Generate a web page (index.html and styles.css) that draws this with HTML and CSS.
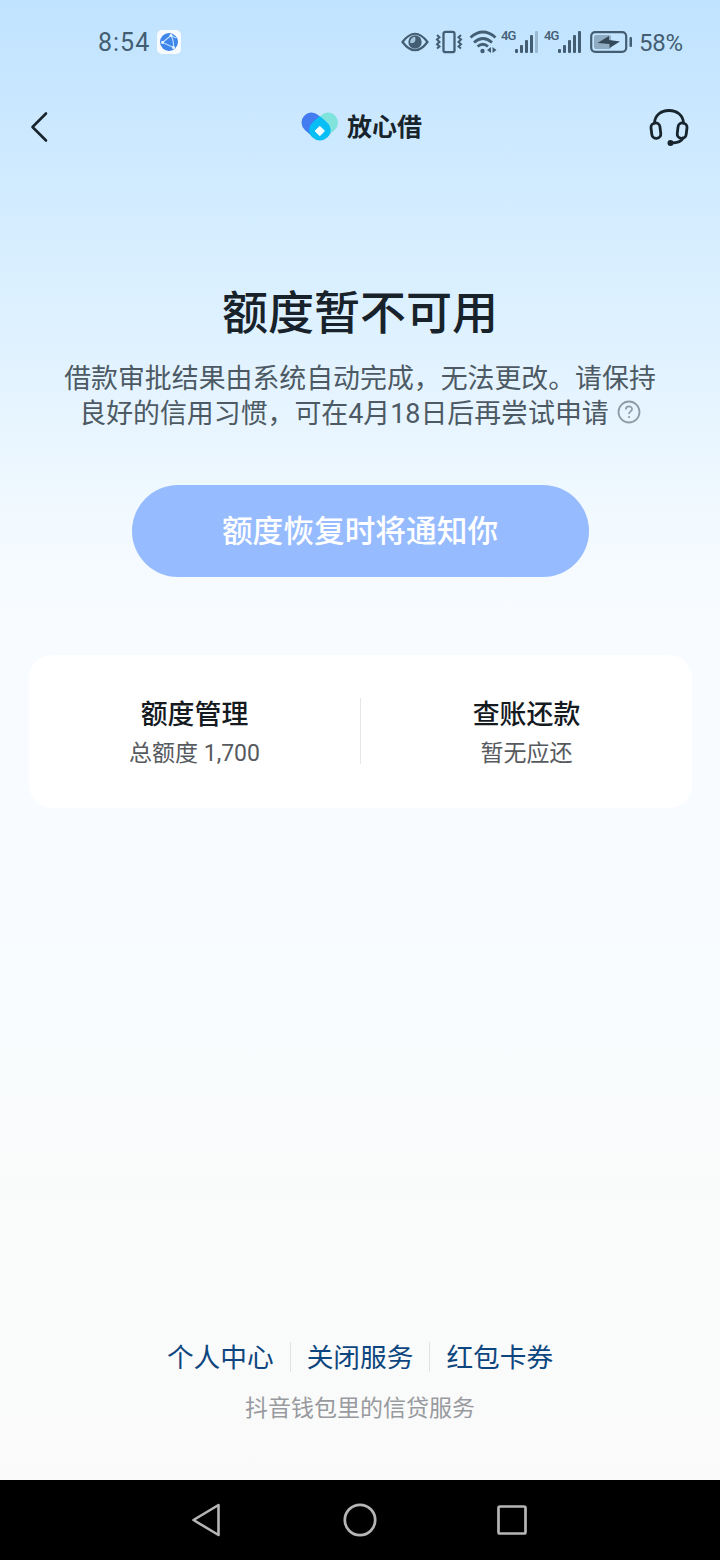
FILE: index.html
```html
<!DOCTYPE html>
<html lang="zh-CN">
<head>
<meta charset="utf-8">
<title>放心借</title>
<link rel="stylesheet" href="styles.css">
</head>
<body>
<div class="screen">
  <header class="status">
    <span class="time">8:54</span>
    <svg class="app-badge" width="24" height="24" viewBox="0 0 24 24">
      <rect width="24" height="24" rx="5" fill="#f7fbff"/>
      <circle cx="12" cy="12" r="9" fill="#3f86ea"/>
      <path d="M5.500 12.500L14 5.500Q17 11 16.500 17.500M5.500 12.500L16.500 17.500M14 5.500L19 8" fill="none" stroke="#b9dcff" stroke-width="1.200"/>
      <circle cx="14" cy="5.500" r="1.400" fill="#e8f5ff"/><circle cx="5.500" cy="12.500" r="1.400" fill="#e8f5ff"/><circle cx="16.500" cy="17.500" r="1.500" fill="#e8f5ff"/>
    </svg>
    <div class="indicators">
      <svg width="28" height="20" viewBox="0 0 28 20">
        <path d="M1.500 10Q14-6.500 26.500 10Q14 26.500 1.500 10Z" fill="none" stroke="#435e73" stroke-width="2.200"/>
        <circle cx="14" cy="10" r="6.700" fill="#435e73"/>
        <path d="M9 10.500Q9.500 5.500 14 4.800Q15.500 9 12.500 10.800Q10.500 11.800 9 10.500Z" fill="#a5c5dd"/>
      </svg>
      <svg class="vibrate" width="28" height="24" viewBox="0 0 28 24" fill="none" stroke="#435e73" stroke-width="2">
        <rect x="8.500" y="1.800" width="11" height="20.400" rx="2" stroke-width="2.300"/>
        <path d="M2 5l2.500 2.300L2 9.600l2.500 2.300L2 14.200l2.500 2.300L2 18.500M26 5l-2.500 2.300L26 9.600l-2.500 2.300 2.500 2.300-2.500 2.300 2.500 2"/>
      </svg>
      <svg class="wifi" width="28" height="24" viewBox="0 0 28 24" fill="none" stroke="#435e73">
        <path d="M1.500 7.500Q14-3.500 26.500 7.500M5 12.500Q14 4.500 23 12.500M8.500 16.500Q14 12 19 16.500" stroke-width="2.800"/>
        <circle cx="13.500" cy="21" r="2.200" fill="#435e73" stroke="none"/>
        <path d="M22 17v6l-4-3zM23.500 17v6l4-3z" fill="#435e73" stroke="none"/>
      </svg>
      <span class="net">4G</span>
      <svg class="bars" width="24" height="24" viewBox="0 0 24 24" fill="#435e73">
        <rect x="0" y="19" width="3" height="4" rx="1"/><rect x="5" y="15" width="3" height="8" rx="1"/><rect x="10" y="10" width="3" height="13" rx="1"/><rect x="15" y="5" width="3" height="18" rx="1"/><rect x="20" y="1" width="3" height="22" rx="1" fill="#9bb9d0"/>
      </svg>
      <span class="net net-two">4G</span>
      <svg class="bars" width="24" height="24" viewBox="0 0 24 24" fill="#435e73">
        <rect x="0" y="19" width="3" height="4" rx="1"/><rect x="5" y="15" width="3" height="8" rx="1"/><rect x="10" y="10" width="3" height="13" rx="1"/><rect x="15" y="5" width="3" height="18" rx="1"/><rect x="20" y="1" width="3" height="22" rx="1"/>
      </svg>
      <svg class="battery" width="43" height="24" viewBox="0 0 43 24">
        <rect x="1.200" y="2.200" width="35" height="19.600" rx="4" fill="none" stroke="#435e73" stroke-width="2.200"/>
        <rect x="4" y="5" width="17" height="14" rx="2" fill="#8facc2"/>
        <path d="M7.500 13L19 6V10L30 11.500L19.500 18V14Z" fill="#34495a"/>
        <rect x="39.500" y="7" width="2.500" height="10" rx="1" fill="#435e73"/>
      </svg>
      <span class="percent">58%</span>
    </div>
  </header>

  <nav class="nav">
    <svg class="back" width="20" height="32" viewBox="0 0 20 32"><path d="M17 2.500L3.500 16L17 29.500" fill="none" stroke="#18242c" stroke-width="2.600" stroke-linecap="round" stroke-linejoin="round"/></svg>
    <div class="brand">
      <svg width="38" height="30" viewBox="0 0 38 30">
        <path d="M27 10.500L19 18" stroke="#80e3dc" stroke-width="20" stroke-linecap="round"/>
        <path d="M10.500 10.500L19 18" stroke="#437cf1" stroke-width="20" stroke-linecap="round"/>
        <path d="M18.800 4.500Q21 5.500 26.500 11C30.500 15 30.800 21 26.500 25.200Q18.800 32 11.200 25.200C7 21 7.200 15 11.200 11Q16.500 5.500 18.800 4.500Z" fill="#08bff5"/>
        <path d="M18.800 14.300L23.500 19L18.800 23.700L14.100 19Z" fill="#f2fdff" stroke="#f2fdff" stroke-linejoin="round"/>
      </svg>
      <span class="brand-name">放心借</span>
    </div>
    <svg class="service" width="40" height="38" viewBox="0 0 40 38" fill="none" stroke="#18242c" stroke-width="2.800" stroke-linecap="round">
      <path d="M5.500 15C6 7 12 2.500 20 2.500s14 4.500 14.500 12.500"/>
      <rect x="2.300" y="15" width="9" height="15.500" rx="4.500" transform="rotate(-7 6.500 22)"/>
      <rect x="28.700" y="15" width="9" height="15.500" rx="4.500" transform="rotate(7 33.500 22)"/>
      <path d="M34 30q-2 5-12 5"/><circle cx="21.500" cy="35" r="3" fill="#18242c" stroke="none"/>
    </svg>
  </nav>

  <main class="content">
    <h1 class="title">额度暂不可用</h1>
    <p class="notice">借款审批结果由系统自动完成，无法更改。请保持<br>良好的信用习惯，可在4月18日后再尝试申请<svg class="help" width="24" height="24" viewBox="0 0 24 24" fill="none" stroke="#8f9ba5"><circle cx="12" cy="12" r="10.500" stroke-width="1.800"/><path d="M8.900 9.500c0-4 6.200-4 6.200-.4 0 2.300-3.100 2.300-3.100 5" stroke-width="1.700"/><circle cx="12" cy="17" r="1.100" fill="#8f9ba5" stroke="none"/></svg></p>
    <button class="action">额度恢复时将通知你</button>
    <section class="card">
      <div class="cell"><div class="cell-title">额度管理</div><div class="cell-sub">总额度 1,700</div></div>
      <div class="cell"><div class="cell-title">查账还款</div><div class="cell-sub">暂无应还</div></div>
    </section>
  </main>

  <footer class="footer">
    <div class="links"><a class="link">个人中心</a><a class="link">关闭服务</a><a class="link">红包卡券</a></div>
    <div class="tagline">抖音钱包里的信贷服务</div>
  </footer>

  <div class="system-nav">
    <svg width="34" height="34" viewBox="0 0 34 34"><path d="M27.500 2L2.500 17L27.500 32Z" fill="none" stroke="#b6b6b6" stroke-width="2.600" stroke-linejoin="round"/></svg>
    <svg width="34" height="34" viewBox="0 0 34 34"><circle cx="17" cy="17" r="15.200" fill="none" stroke="#b6b6b6" stroke-width="2.700"/></svg>
    <svg width="34" height="34" viewBox="0 0 34 34"><rect x="3.500" y="3.500" width="27" height="27" rx="1.500" fill="none" stroke="#b6b6b6" stroke-width="2.700"/></svg>
  </div>
</div>
</body>
</html>
```

FILE: styles.css
```css
* { box-sizing: border-box; }
body { margin: 0; font-family: Roboto, "Noto Sans CJK SC", sans-serif; }
svg { display: block; flex: none; }
.screen {
  width: 720px; height: 1560px; display: flex; flex-direction: column; overflow: hidden;
  background: linear-gradient(#c0e3ff 0, #cbe8ff 120px, #dbf0ff 290px, #e8f5ff 430px, #f2faff 520px, #f8fbff 620px, #f8fbff 900px, #f9fbfb 1180px, #fafafa 1480px);
}
.status { height: 84px; display: flex; align-items: center; padding: 0 34px 0 98px; color: #435e73; }
.time { font-size: 25px; line-height: 30px; letter-spacing: 1px; width: 59px; padding-top: 2px; }
.indicators { margin-left: auto; display: flex; align-items: center; margin-top: -1px; }
.vibrate { margin-left: 6px; }
.wifi { margin-left: 6px; }
.net { font-weight: 500; font-size: 13px; line-height: 14px; width: 15px; height: 26px; margin-left: 4px; letter-spacing: -0.8px; }
.net-two { margin-left: 5px; }
.bars { margin-left: -1px; }
.battery { margin-left: 8px; }
.percent { font-size: 24px; line-height: 30px; letter-spacing: -0.3px; margin-left: 6px; padding-top: 3px; width: 47px; }
.nav { height: 86px; display: flex; align-items: center; justify-content: space-between; padding: 0 31px 0 29px; }
.back { margin-top: -1px; }
.brand { display: flex; align-items: center; gap: 8px; margin-left: 25px; }
.brand-name { font-size: 25px; line-height: 30px; padding-top: 2px; font-weight: 700; color: #18242c; }
.content { display: flex; flex-direction: column; align-items: center; padding: 111px 28px 0; }
.title { margin: 0; font-size: 46px; line-height: 64px; font-weight: 500; color: #18222a; }
.notice { margin: 17px 0 0; font-size: 26.9px; line-height: 35px; color: #4d5a64; text-align: center; white-space: nowrap; }
.help { display: inline-block; vertical-align: -1px; margin-left: 8px; }
.action { margin: 53px 0 0; padding: 2px 0 0; width: 457px; height: 92px; border: 0; border-radius: 46px; background: #96bbff; color: #fff; font-family: inherit; font-size: 30.7px; line-height: 44px; font-weight: 500; }
.card { width: 663px; height: 153px; margin: 78px 0 0 1px; padding-bottom: 2px; border-radius: 23px; background: #fff; display: grid; grid-template-columns: 331px 332px; align-items: center; text-align: center; }
.cell { height: 66px; }
.cell + .cell { border-left: 1px solid #e4e6e9; }
.cell-title { font-size: 26.9px; line-height: 34px; font-weight: 500; color: #151a1f; }
.cell-sub { font-size: 23px; line-height: 32px; margin-top: 6px; color: #565a5e; }
.footer { margin-top: auto; text-align: center; padding-bottom: 55px; }
.links { display: flex; justify-content: center; }
.link { padding: 2px 16px 0; font-size: 26.7px; line-height: 28px; color: #0d467e; }
.link + .link { border-left: 1px solid #e0e3e6; }
.tagline { margin-top: 21px; font-size: 23px; line-height: 32px; color: #989a9f; }
.system-nav { height: 80px; flex: none; background: #000; display: flex; justify-content: center; align-items: center; gap: 118px; }
```
